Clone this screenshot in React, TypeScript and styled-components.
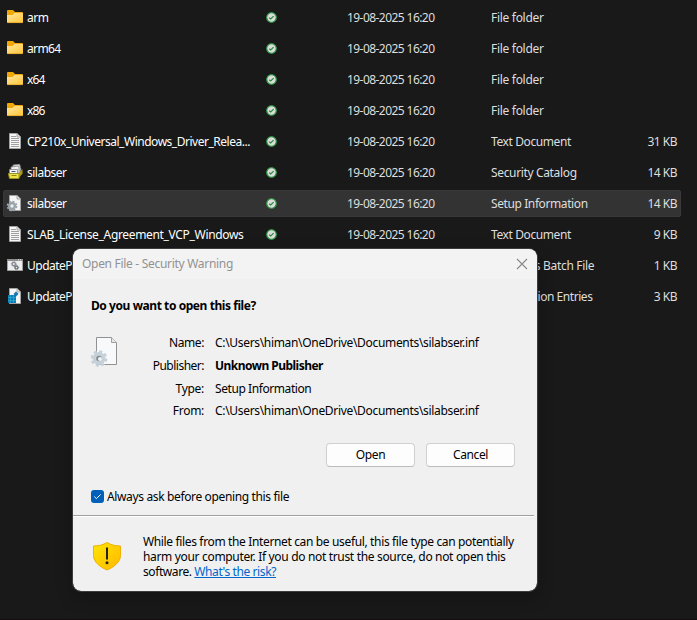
import React from 'react';
import styled, { createGlobalStyle } from 'styled-components';

const Global = createGlobalStyle`
  * { box-sizing: border-box; }
  html, body { margin: 0; background: #191919; }
  body { font: 12px/15px 'Noto Sans', 'Open Sans', sans-serif; overflow: hidden; }
`;

const Screen = styled.div`
  position: relative;
  width: 697px;
  height: 620px;
  overflow: hidden;
  background: #191919;
  border-bottom: 1px solid #140d10;
`;

const FileList = styled.div`
  display: flex;
  flex-direction: column;
  gap: 4px;
  padding: 4px 0 0 3px;
`;

const Row = styled.div<{ $selected?: boolean }>`
  display: grid;
  grid-template-columns: 23px 238px 82px 144px 140px 46px;
  align-items: center;
  width: 678px;
  height: 27px;
  border-radius: 2px;
  border: 1px solid ${p => (p.$selected ? '#393939' : 'transparent')};
  background: ${p => (p.$selected ? '#333333' : 'transparent')};
`;

const IconCell = styled.span`
  display: flex;
  padding-left: 2px;
`;

const Cell = styled.span<{ $tracking: number; $bright?: boolean }>`
  white-space: nowrap;
  color: ${p => (p.$bright ? '#ffffff' : '#dedede')};
  letter-spacing: ${p => p.$tracking}px;
`;

const SizeCell = styled(Cell)`
  text-align: right;
`;

const StatusCell = styled.span`
  display: flex;
  padding-left: 1px;
`;

const Dialog = styled.section`
  position: absolute;
  left: 72px;
  top: 248px;
  width: 466px;
  height: 344px;
  display: flex;
  flex-direction: column;
  border: 1px solid #3c3c3c;
  border-radius: 9px;
  background: #f0f0f0;
  background-clip: padding-box;
  color: #000;
  overflow: hidden;
  box-shadow: 0 6px 16px rgba(0, 0, 0, 0.25);
`;

const TitleBar = styled.header`
  height: 30px;
  flex: none;
  display: flex;
  align-items: center;
  justify-content: space-between;
  padding: 0 9px 1px;
  background: #f3f3f3;
  color: #929292;
`;

const Label = styled.span<{ $tracking: number }>`
  white-space: nowrap;
  letter-spacing: ${p => p.$tracking}px;
`;

const CloseButton = styled.button`
  display: flex;
  padding: 0;
  border: 0;
  background: none;
`;

const Body = styled.div`
  height: 236px;
  flex: none;
  padding: 19px 22px 0 18px;
  display: flex;
  flex-direction: column;
`;

const Question = styled.h1`
  margin: 0;
  font-size: 12px;
  line-height: 15px;
`;

const Details = styled.div`
  display: grid;
  grid-template-columns: 50px 63px 1fr;
  margin-top: 18px;
`;

const Fields = styled.dl`
  display: grid;
  grid-column: 2 / 4;
  grid-template-columns: 63px 1fr;
  grid-template-rows: 23px 23px 22px 23px;
  column-gap: 11px;
  align-items: center;
  margin: 0;
`;

const FieldName = styled.dt`
  text-align: right;
`;

const FieldValue = styled.dd<{ $strong?: boolean }>`
  margin: 0;
  font-weight: ${p => (p.$strong ? 700 : 400)};
`;

const FileIconBox = styled.div`
  padding-top: 5px;
`;

const Actions = styled.div`
  display: flex;
  justify-content: flex-end;
  gap: 11px;
  margin-top: 21px;
`;

const Button = styled.button`
  width: 89px;
  height: 24px;
  padding: 0 0 1px;
  border: 1px solid #d0d0d0;
  border-bottom-color: #bcbcbc;
  border-radius: 4px;
  background: #fdfdfd;
  color: #000;
  font: inherit;
`;

const CheckRow = styled.label`
  display: flex;
  align-items: center;
  gap: 3px;
  margin-top: 22px;
`;

const CheckBox = styled.span`
  display: flex;
  align-items: center;
  justify-content: center;
  width: 13px;
  height: 13px;
  border-radius: 3px;
  background: #005fb8;
`;

const Divider = styled.hr`
  flex: none;
  width: 461px;
  height: 2px;
  margin: 0;
  border: 0;
  border-top: 1px solid #a0a0a0;
  background: #fff;
`;

const Notice = styled.footer`
  display: grid;
  grid-template-columns: 51px 1fr;
  padding: 17px 0 0 19px;
`;

const NoticeText = styled.p`
  margin: 0;
`;

const NoticeLine = styled(Label)`
  display: block;
`;

const RiskLink = styled.a`
  color: #0066cc;
  text-decoration: underline;
`;

const ShieldBox = styled.div`
  padding-top: 7px;
`;

type Kind = 'folder' | 'text' | 'catalog' | 'setup' | 'batch' | 'registry';

function GearShape({ cx, cy, r, fill, hole }: { cx: number; cy: number; r: number; fill: string; hole: string }) {
  return (
    <g transform={`translate(${cx} ${cy}) scale(${r})`}>
      <circle r=".78" fill={fill} />
      <circle r=".87" fill="none" stroke={fill} strokeWidth=".27" strokeDasharray=".38 .303" />
      <circle r=".33" fill={hole} />
    </g>
  );
}

function FileIcon({ kind }: { kind: Kind }) {
  return (
    <svg width="18" height="17" viewBox="0 1 18 17">
      <defs>
        <linearGradient id="folder" x2="1" y2="1">
          <stop stopColor="#ffe7a0" />
          <stop offset="1" stopColor="#fdc536" />
        </linearGradient>
      </defs>
      {kind === 'folder' && (
        <>
          <path d="M1 3q0-1 1-1h5l2 2h7q1 0 1 1v9H1z" fill="#f1a807" />
          <path d="M1 7h5.500l2-2H16.500l.5.500V14q0 1-1 1H2q-1 0-1-1z" fill="url(#folder)" />
          <path d="M1.500 14.600h15" stroke="#e2a22a" strokeWidth=".8" />
        </>
      )}
      {(kind === 'text' || kind === 'setup' || kind === 'registry') && (
        <>
          <path d="M3.500 1.500h7.500l3.500 3.500v11.500h-11z" fill="#f5f5f5" stroke="#a3a3a3" />
          <path d="M11 1.500v3.500h3.500" fill="#ddd" stroke="#aaa" />
        </>
      )}
      {kind === 'text' && <path d="M5 4.500h5M5 6.500h8M5 8.500h8M5 10.500h8M5 12.500h8M5 14.500h8" stroke="#a0a0a0" />}
      {kind === 'setup' && <GearShape cx={6} cy={12} r={5.300} fill="#9ba4aa" hole="#e8edf0" />}
      {kind === 'catalog' && (
        <>
          <path d="M7 2l6.500-1 1.500 5-1 5H6z" fill="#ddd" stroke="#777" strokeWidth=".8" />
          <path d="M5 4l7-1 1 1v7H5z" fill="#eee" stroke="#888" strokeWidth=".8" />
          <path d="M3.500 6.500h8v5h-8z" fill="#f5f5f5" stroke="#888" strokeWidth=".8" />
          <path d="M5.500 8.500h4" stroke="#457" />
          <path d="M12.500 10.500l4-4.500v4.500l-4 5z" fill="#a69b20" />
          <path d="M2.500 10.500h10.500v5H3.500z" fill="#eee34b" stroke="#9d941e" />
          <path d="M5.500 12.500h5" stroke="#8d8519" />
        </>
      )}
      {kind === 'batch' && (
        <>
          <path d="M1.500 4.500h15v10h-15z" fill="#eee" stroke="#a2a2a2" />
          <path d="M1 4h16" stroke="#8e8e8e" strokeWidth="2" />
          <path d="M12 3.800h1M14 3.800h1" stroke="#eee" />
          <GearShape cx={7.800} cy={8} r={2.900} fill="#858b91" hole="#eee" />
          <GearShape cx={10.500} cy={11.500} r={2.600} fill="#666e75" hole="#eee" />
        </>
      )}
      {kind === 'registry' && (
        <>
          <path d="M2 8h8v8H2z" fill="#087fb6" />
          <path d="M2 10.500h8M2 13.500h8M4.500 8v8M7.500 8v8" stroke="#43b5df" strokeWidth=".5" />
          <path d="M7.500 7l2.500-2.500 2.500 2.500-2.500 2.500z" fill="#1479b3" />
        </>
      )}
    </svg>
  );
}

function Synced() {
  return (
    <svg width="11" height="11" viewBox="0 0 11 11">
      <circle cx="5.500" cy="5.500" r="4.800" fill="#d9dcd9" stroke="#2a9342" strokeWidth="1.200" />
      <path d="M3.200 5.700l1.500 1.300 2.900-2.900" fill="none" stroke="#278a3d" strokeWidth="1.200" />
    </svg>
  );
}

interface Item {
  kind: Kind;
  name: string;
  type: string;
  size?: string;
  synced?: boolean;
  selected?: boolean;
  nameTracking?: number;
  typeTracking?: number;
}

const items: Item[] = [
  { kind: 'folder', name: 'arm', type: 'File folder', synced: true, nameTracking: -0.5 },
  { kind: 'folder', name: 'arm64', type: 'File folder', synced: true, nameTracking: -0.65 },
  { kind: 'folder', name: 'x64', type: 'File folder', synced: true, nameTracking: -0.8 },
  { kind: 'folder', name: 'x86', type: 'File folder', synced: true, nameTracking: -0.8 },
  { kind: 'text', name: 'CP210x_Universal_Windows_Driver_Relea...', type: 'Text Document', size: '31 KB', synced: true, nameTracking: -0.48, typeTracking: -0.4 },
  { kind: 'catalog', name: 'silabser', type: 'Security Catalog', size: '14 KB', synced: true, nameTracking: -0.5, typeTracking: -0.35 },
  { kind: 'setup', name: 'silabser', type: 'Setup Information', size: '14 KB', synced: true, selected: true, nameTracking: -0.5, typeTracking: -0.4 },
  { kind: 'text', name: 'SLAB_License_Agreement_VCP_Windows', type: 'Text Document', size: '9 KB', synced: true, nameTracking: -0.33, typeTracking: -0.4 },
  { kind: 'batch', name: 'UpdateParam', type: 'Windows Batch File', size: '1 KB', nameTracking: -0.5 },
  { kind: 'registry', name: 'UpdateParam', type: 'Registration Entries', size: '3 KB', nameTracking: -0.5, typeTracking: -0.45 },
];

const fields = [
  { name: 'Name:', value: 'C:\\Users\\himan\\OneDrive\\Documents\\silabser.inf', nameTracking: -0.4, valueTracking: -0.32 },
  { name: 'Publisher:', value: 'Unknown Publisher', strong: true, nameTracking: -0.5, valueTracking: -0.53 },
  { name: 'Type:', value: 'Setup Information', nameTracking: -0.3, valueTracking: -0.42 },
  { name: 'From:', value: 'C:\\Users\\himan\\OneDrive\\Documents\\silabser.inf', nameTracking: -0.3, valueTracking: -0.32 },
];

export default function App() {
  return (
    <Screen>
      <Global />
      <FileList>
        {items.map((item, i) => (
          <Row key={i} $selected={item.selected}>
            <IconCell><FileIcon kind={item.kind} /></IconCell>
            <Cell $bright $tracking={item.nameTracking ?? -0.3}>{item.name}</Cell>
            <StatusCell>{item.synced && <Synced />}</StatusCell>
            <Cell $tracking={-0.56}>{item.synced && '19-08-2025 16:20'}</Cell>
            <Cell $tracking={item.typeTracking ?? -0.3}>{item.type}</Cell>
            <SizeCell $tracking={-0.5}>{item.size}</SizeCell>
          </Row>
        ))}
      </FileList>
      <Dialog>
        <TitleBar>
          <Label $tracking={-0.3}>Open File - Security Warning</Label>
          <CloseButton aria-label="Close">
            <svg width="12" height="12" viewBox="0 0 12 12">
              <path d="M1 1l10 10M11 1L1 11" stroke="#898989" strokeWidth="1.100" />
            </svg>
          </CloseButton>
        </TitleBar>
        <Body>
          <Question><Label $tracking={-0.43}>Do you want to open this file?</Label></Question>
          <Details>
            <FileIconBox>
              <svg width="28" height="32" viewBox="0 0 28 32">
                <path d="M5.500 1.500h15l5 5v22h-20z" fill="#f8f9fa" stroke="#919191" />
                <path d="M20.500 1.500v5h5" fill="#e7e7e7" stroke="#a0a0a0" />
                <GearShape cx={8} cy={22.500} r={8.300} fill="#c5d0d9" hole="#808b92" />
                <circle cx="9" cy="23" r="2" fill="#f3f5f6" />
              </svg>
            </FileIconBox>
            <Fields>
              {fields.map(f => (
                <React.Fragment key={f.name}>
                  <FieldName><Label $tracking={f.nameTracking}>{f.name}</Label></FieldName>
                  <FieldValue $strong={f.strong}><Label $tracking={f.valueTracking}>{f.value}</Label></FieldValue>
                </React.Fragment>
              ))}
            </Fields>
          </Details>
          <Actions>
            <Button><Label $tracking={-0.3}>Open</Label></Button>
            <Button><Label $tracking={-0.4}>Cancel</Label></Button>
          </Actions>
          <CheckRow>
            <CheckBox>
              <svg width="9" height="9" viewBox="0 0 9 9">
                <path d="M1.300 4.600l2.100 2 4.200-4.200" fill="none" stroke="#fff" />
              </svg>
            </CheckBox>
            <Label $tracking={-0.36}>Always ask before opening this file</Label>
          </CheckRow>
        </Body>
        <Divider />
        <Notice>
          <ShieldBox>
            <svg width="30" height="31" viewBox="0 0 30 31">
              <defs>
                <linearGradient id="shield" x2="1" y2="1">
                  <stop stopColor="#ffe500" />
                  <stop offset="1" stopColor="#ffb800" />
                </linearGradient>
              </defs>
              <path d="M15 1.500C11 4 6 5 1.500 5v9.500c0 7 7.500 12 13.500 14.500 6-2.500 13.500-7.500 13.500-14.500V5C24 5 19 4 15 1.500z" fill="url(#shield)" stroke="#edb200" />
              <path d="M14 6.500h2v12h-2z" fill="#24211a" />
              <circle cx="15" cy="21.700" r="1.500" fill="#24211a" />
            </svg>
          </ShieldBox>
          <NoticeText>
            <NoticeLine $tracking={-0.355}>While files from the Internet can be useful, this file type can potentially</NoticeLine>
            <NoticeLine $tracking={-0.33}>harm your computer. If you do not trust the source, do not open this</NoticeLine>
            <NoticeLine $tracking={-0.41}>software. <RiskLink>What's the risk?</RiskLink></NoticeLine>
          </NoticeText>
        </Notice>
      </Dialog>
    </Screen>
  );
}
